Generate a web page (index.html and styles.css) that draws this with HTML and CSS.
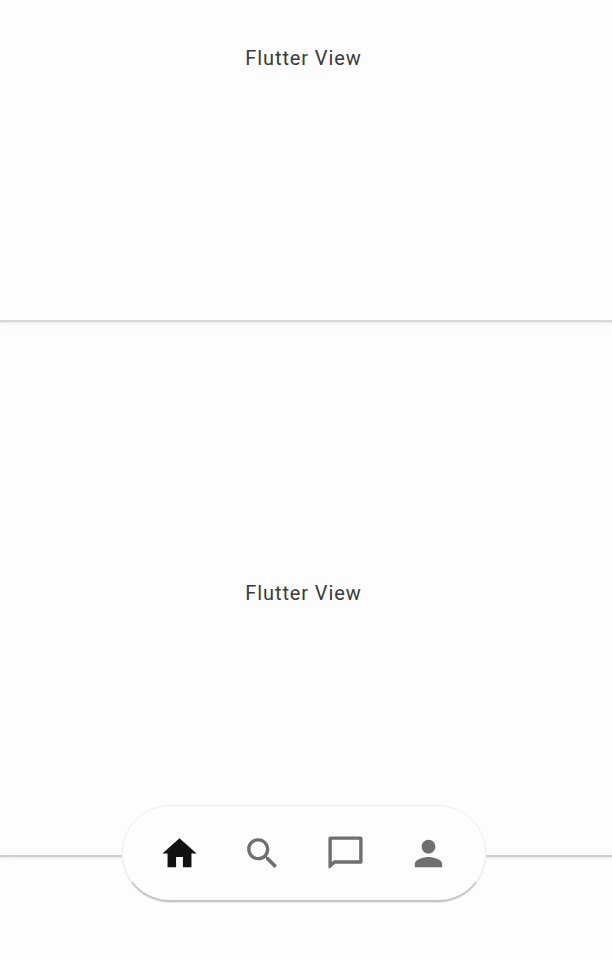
FILE: index.html
```html
<!DOCTYPE html>
<html lang="en">
<head>
    <meta charset="UTF-8">
    <meta name="viewport" content="width=device-width, initial-scale=1.0">
    <title>Flutter View</title>
    <link rel="stylesheet" href="styles.css">
</head>
<body>
    <div class="screen">
        <section class="pane pane-top">
            <span class="pane-label">Flutter View</span>
        </section>
        <section class="pane pane-middle">
            <span class="pane-label">Flutter View</span>
        </section>
        <section class="pane pane-bottom"></section>

        <nav class="bottom-nav">
            <a class="nav-item active" href="#" aria-label="Home">
                <svg viewBox="0 0 24 24"><path d="M10 20v-6h4v6h5v-8h3L12 3 2 12h3v8z"/></svg>
            </a>
            <a class="nav-item" href="#" aria-label="Search">
                <svg viewBox="0 0 24 24"><path d="M15.5 14h-.79l-.28-.27C15.41 12.59 16 11.11 16 9.5 16 5.91 13.09 3 9.5 3S3 5.91 3 9.5 5.91 16 9.5 16c1.61 0 3.09-.59 4.23-1.57l.27.28v.79l5 4.99L20.49 19l-4.99-5zm-6 0C7.01 14 5 11.99 5 9.5S7.01 5 9.5 5 14 7.01 14 9.5 11.99 14 9.5 14z"/></svg>
            </a>
            <a class="nav-item" href="#" aria-label="Messages">
                <svg viewBox="0 0 24 24"><path d="M20.8 2H3.2C2.5 2 2 2.5 2 3.2v17c0 .5.5.7.9.4L6 18h14.8c.7 0 1.2-.5 1.2-1.2V3.2C22 2.5 21.5 2 20.8 2zM20 16H5.2L4 17.1V4h16v12z"/></svg>
            </a>
            <a class="nav-item" href="#" aria-label="Profile">
                <svg viewBox="0 0 24 24"><path d="M12 12c2.21 0 4-1.79 4-4s-1.79-4-4-4-4 1.79-4 4 1.79 4 4 4zm0 2c-2.67 0-8 1.34-8 4v2h16v-2c0-2.66-5.33-4-8-4z"/></svg>
            </a>
        </nav>
    </div>
</body>
</html>
```

FILE: styles.css
```css
html, body {
    margin: 0;
    padding: 0;
}
body {
    background-color: #fdfdfd;
    font-family: Roboto, "Liberation Sans", sans-serif;
}
.screen {
    position: relative;
    width: 612px;
    height: 960px;
    overflow: hidden;
    display: flex;
    flex-direction: column;
}
.pane {
    display: flex;
    justify-content: center;
    box-sizing: border-box;
    padding-right: 5px;
}
.pane-top {
    height: 322px;
    padding-top: 46px;
    border-bottom: 2px solid #d2d2d2;
    box-shadow: 0 1px 1px #ececec, 0 3px 8px #f6f6f6;
}
.pane-middle {
    height: 535px;
    padding-top: 259px;
    border-bottom: 2px solid #cfcfcf;
    box-shadow: 0 1px 1px #ececec, 0 3px 8px #f6f6f6;
}
.pane-bottom {
    flex: 1;
}
.pane-label {
    font-size: 20px;
    line-height: 24px;
    letter-spacing: 0.9px;
    color: #3a3a3a;
}
.bottom-nav {
    position: absolute;
    left: 122px;
    top: 805px;
    width: 364px;
    height: 97px;
    box-sizing: border-box;
    padding: 0 15px;
    display: flex;
    align-items: center;
    background-color: #fdfdfd;
    border: 1px solid #eeeeee;
    border-bottom: 2px solid #c4c4c4;
    border-radius: 48px;
    box-shadow: 0 1px 1px #e8e8e8;
}
.nav-item {
    width: 83px;
    display: flex;
    justify-content: center;
    fill: #6f6f6f;
}
.nav-item.active {
    fill: #111111;
}
.nav-item svg {
    width: 41px;
    height: 41px;
}
```
